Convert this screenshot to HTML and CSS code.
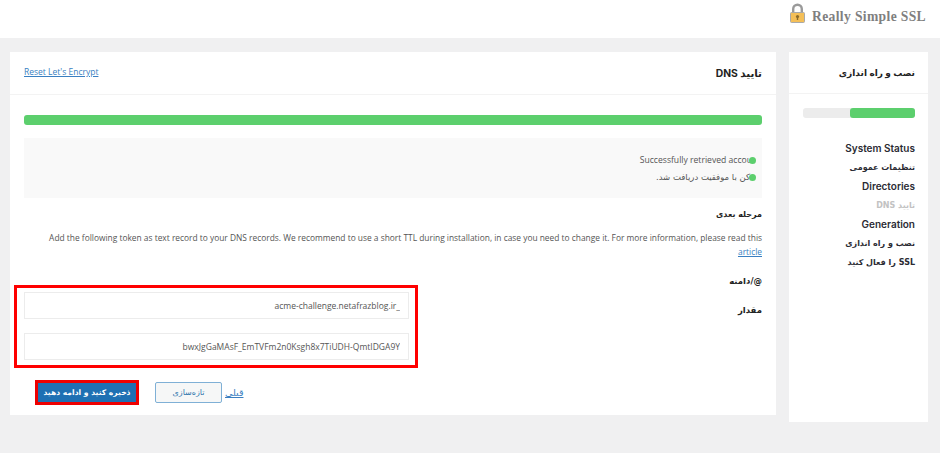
FILE: index.html
```html
<!DOCTYPE html>
<html lang="fa" dir="rtl">
<head>
    <meta charset="UTF-8">
    <meta name="viewport" content="width=device-width, initial-scale=1.0">
    <title>Really Simple SSL</title>
    <link rel="stylesheet" href="styles.css">
</head>
<body>
    <header class="top-bar">
        <div class="logo" dir="ltr">
            <svg class="logo-lock" width="15" height="20" viewBox="0 0 15 20">
                <path d="M3.2 10V6a4.3 4.3 0 0 1 8.6 0v4" fill="none" stroke="#9a9a9a" stroke-width="2.4"/>
                <rect x="0.5" y="9.5" width="14" height="10" rx="1" fill="#f4bf58" stroke="#a9a9a9"/>
                <circle cx="7.5" cy="13.5" r="1.6" fill="#8a6a2a"/>
                <rect x="6.8" y="13.5" width="1.4" height="3.5" fill="#8a6a2a"/>
            </svg>
            <span class="logo-text">Really Simple SSL</span>
        </div>
    </header>

    <div class="page">
        <aside class="sidebar">
            <h2 class="sidebar-title">نصب و راه اندازی</h2>
            <div class="sidebar-body">
                <div class="side-progress"><div class="side-progress-fill"></div></div>
                <ul class="steps">
                    <li>System Status</li>
                    <li class="fa">تنظیمات عمومی</li>
                    <li>Directories</li>
                    <li class="fa current">تایید DNS</li>
                    <li>Generation</li>
                    <li class="fa">نصب و راه اندازی</li>
                    <li class="fa">SSL را فعال کنید</li>
                </ul>
            </div>
        </aside>

        <main class="card">
            <div class="card-head">
                <h1 class="card-title">تایید DNS</h1>
                <a class="reset-link" href="#">Reset Let's Encrypt</a>
            </div>
            <div class="card-body">
                <div class="main-progress"></div>

                <ul class="notices">
                    <li><span class="dot"></span>Successfully retrieved accou</li>
                    <li class="fa"><span class="dot"></span>کن با موفقیت دریافت شد.</li>
                </ul>

                <h3 class="next-title">مرحله بعدی</h3>
                <p class="intro" dir="ltr">Add the following token as text record to your DNS records. We recommend to use a short TTL during installation, in case you need to change it. For more information, please read this <a href="#">article</a></p>

                <div class="record-form">
                    <div class="record-labels">
                        <label for="domain">@/دامنه</label>
                        <label for="token">مقدار</label>
                    </div>
                    <div class="record-inputs">
                        <input type="text" id="domain" value="_acme-challenge.netafrazblog.ir" dir="rtl">
                        <input type="text" id="token" value="bwxJgGaMAsF_EmTVFm2n0Ksgh8x7TiUDH-QmtIDGA9Y" dir="ltr">
                        <div class="red-mark"></div>
                    </div>
                </div>

                <div class="actions">
                    <a class="prev-link" href="#">قبلی</a>
                    <button class="btn-refresh">تازه‌سازی</button>
                    <button class="btn-save">ذخیره کنید و ادامه دهید</button>
                </div>
            </div>
        </main>
    </div>
</body>
</html>
```

FILE: styles.css
```css
* {
    box-sizing: border-box;
}
html, body {
    height: 100%;
}
body {
    margin: 0;
    background: #f0f0f1;
    color: #2a2a2a;
    font-family: "Open Sans", "DejaVu Sans", sans-serif;
    font-size: 8.6px;
    overflow: hidden;
}
.top-bar {
    height: 38px;
    background: #fff;
    display: flex;
    align-items: flex-start;
    padding: 3px 0 0 0;
}
.logo {
    display: flex;
    align-items: flex-start;
    margin-right: 14px;
}
.logo-lock {
    margin-right: 7px;
}
.logo-text {
    font-family: "Liberation Serif", serif;
    font-weight: bold;
    font-size: 13.6px;
    letter-spacing: 0.35px;
    color: #7f7f7f;
    margin-top: 6px;
}
.page {
    display: flex;
    align-items: flex-start;
    gap: 13px;
    padding: 14px 12px 0 164px;
    width: 940px;
}
.sidebar {
    width: 139px;
    height: 370px;
    flex-shrink: 0;
    background: #fff;
}
.sidebar-title {
    margin: 0;
    height: 42px;
    padding: 14px 13px 0 0;
    font-size: 9px;
    font-weight: bold;
    color: #222;
    border-bottom: 1px solid #f3f3f3;
}
.sidebar-body {
    padding: 14px 13px 0 14px;
}
.side-progress {
    height: 10px;
    background: #ececec;
    border-radius: 3px;
}
.side-progress-fill {
    width: 65px;
    height: 10px;
    background: #5ccf6d;
    border-radius: 3px;
}
.steps {
    list-style: none;
    margin: 21px 0 0 0;
    padding: 0;
}
.steps li {
    height: 19px;
    line-height: 19px;
    font-family: "Inter", "DejaVu Sans", sans-serif;
    font-size: 10px;
    font-weight: 600;
    color: #2b2b33;
}
.steps li.fa {
    font-family: "DejaVu Sans", sans-serif;
    font-size: 8px;
    font-weight: bold;
}
.steps li.current {
    color: #c2c2c2;
}
.card {
    width: 766px;
    height: 363px;
    flex-shrink: 0;
    background: #fff;
}
.card-head {
    height: 43px;
    display: flex;
    justify-content: space-between;
    align-items: flex-start;
    padding: 13px 14px 0 14px;
    border-bottom: 1px solid #f3f3f3;
}
.card-title {
    margin: 0;
    font-family: "Inter", "DejaVu Sans", sans-serif;
    font-size: 10.3px;
    font-weight: bold;
    color: #222;
    line-height: 16px;
}
.reset-link {
    color: #3a7fc1;
    font-size: 8.5px;
    line-height: 12px;
    margin-top: 1px;
}
.card-body {
    padding: 20px 14px 0 14px;
}
.main-progress {
    height: 10px;
    background: #5ccf6d;
    border-radius: 3px;
}
.notices {
    list-style: none;
    margin: 13px 0 0 0;
    padding: 16px 6px 0 0;
    height: 60px;
    background: #f9f9f9;
}
.notices li {
    position: relative;
    height: 17px;
    line-height: 13px;
    padding-right: 4px;
    color: #555;
}
.notices li.fa {
    font-family: "DejaVu Sans", sans-serif;
    font-size: 8.5px;
    padding-right: 6px;
}
.dot {
    position: absolute;
    right: 0;
    top: 3px;
    width: 7px;
    height: 7px;
    border-radius: 50%;
    background: #5ccf6d;
}
.next-title {
    margin: 11px 0 0 0;
    font-family: "DejaVu Sans", sans-serif;
    font-size: 8px;
    font-weight: bold;
    color: #222;
    line-height: 12px;
}
.intro {
    margin: 10px 0 0 0;
    text-align: right;
    font-size: 8.4px;
    line-height: 14px;
    color: #555;
}
.intro a {
    color: #3a7fc1;
}
.record-form {
    display: flex;
    justify-content: space-between;
    align-items: flex-start;
}
.record-labels {
    display: flex;
    flex-direction: column;
    gap: 17px;
    padding-top: 16px;
}
.record-labels label {
    font-family: "DejaVu Sans", sans-serif;
    font-size: 8.5px;
    font-weight: bold;
    color: #222;
    line-height: 12px;
}
.record-inputs {
    position: relative;
    width: 385px;
    display: flex;
    flex-direction: column;
    gap: 14px;
    margin-top: 33px;
}
.record-inputs input {
    width: 100%;
    height: 27px;
    padding: 0 8px;
    border: 1px solid #ececec;
    background: #fff;
    color: #555;
    font-family: "Open Sans", sans-serif;
    font-size: 8.5px;
    outline: none;
}
#token {
    text-align: right;
}
.red-mark {
    position: absolute;
    left: -10px;
    right: -9px;
    top: -7px;
    bottom: -8px;
    border: 3px solid #ff0000;
}
.actions {
    display: flex;
    justify-content: flex-end;
    align-items: center;
    margin-top: 20px;
    padding-left: 11px;
}
.btn-refresh, .btn-save {
    font-family: "DejaVu Sans", sans-serif;
    padding: 0;
}
.btn-save {
    width: 104px;
    height: 25px;
    background: #1e70b3;
    color: #fff;
    font-size: 7.6px;
    font-weight: bold;
    border: 3px solid #ee0000;
    border-radius: 0;
    margin-right: 16px;
}
.btn-refresh {
    width: 67px;
    height: 21px;
    margin-right: 3px;
    background: #f6f7f7;
    color: #2f76ad;
    font-size: 8px;
    border: 1px solid #7fb0d6;
    border-radius: 2px;
}
.prev-link {
    color: #3a7fc1;
    font-family: "DejaVu Sans", sans-serif;
    font-size: 9.5px;
}
```
